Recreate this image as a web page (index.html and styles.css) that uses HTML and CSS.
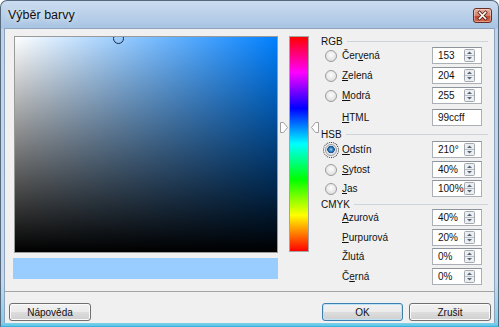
FILE: index.html
```html
<!DOCTYPE html>
<html lang="cs">
<head>
    <meta charset="UTF-8">
    <title>Výběr barvy</title>
    <link rel="stylesheet" href="styles.css">
</head>
<body>
    <div class="window">
        <div class="titlebar">
            <span class="title">Výběr barvy</span>
            <span class="close">
                <svg width="17" height="13" viewBox="0 0 17 13">
                    <path d="M5.5 3.5l6 6M11.5 3.5l-6 6" stroke="#5a2418" stroke-width="3.2" stroke-linecap="square"/>
                    <path d="M5.5 3.5l6 6M11.5 3.5l-6 6" stroke="#fff" stroke-width="1.6" stroke-linecap="square"/>
                </svg>
            </span>
        </div>
        <div class="client">
            <div class="main">
                <div class="picker">
                    <div class="field"><span class="marker"></span></div>
                    <div class="swatch"></div>
                </div>
                <div class="hue">
                    <div class="hue-bar"></div>
                    <svg class="arrow arrow-left" width="8" height="11" viewBox="0 0 8 11">
                        <path d="M0.5 0.5H3.5L7.5 5.5L3.5 10.5H0.5Z" fill="#fff" stroke="#a0a0a0"/>
                    </svg>
                    <svg class="arrow arrow-right" width="8" height="11" viewBox="0 0 8 11">
                        <path d="M7.5 0.5H4.5L0.5 5.5L4.5 10.5H7.5Z" fill="#fff" stroke="#a0a0a0"/>
                    </svg>
                </div>
                <div class="panel">
                    <div class="group group-rgb">RGB</div>
                    <div class="row">
                        <span class="radio"></span>
                        <span class="label">Čer<u>v</u>ená</span>
                        <div class="num"><span>153</span><svg class="spin" width="11" height="13" viewBox="0 0 11 13"><rect x="0.5" y="0.5" width="10" height="12" rx="1" fill="#eceef0" stroke="#a3a9b0"/><path d="M1 6.5H10" stroke="#b9bec4"/><path d="M3 5H8L5.5 2.5Z" fill="#56657a"/><path d="M3 8H8L5.5 10.5Z" fill="#56657a"/></svg></div>
                    </div>
                    <div class="row">
                        <span class="radio"></span>
                        <span class="label"><u>Z</u>elená</span>
                        <div class="num"><span>204</span><svg class="spin" width="11" height="13" viewBox="0 0 11 13"><rect x="0.5" y="0.5" width="10" height="12" rx="1" fill="#eceef0" stroke="#a3a9b0"/><path d="M1 6.5H10" stroke="#b9bec4"/><path d="M3 5H8L5.5 2.5Z" fill="#56657a"/><path d="M3 8H8L5.5 10.5Z" fill="#56657a"/></svg></div>
                    </div>
                    <div class="row">
                        <span class="radio"></span>
                        <span class="label"><u>M</u>odrá</span>
                        <div class="num"><span>255</span><svg class="spin" width="11" height="13" viewBox="0 0 11 13"><rect x="0.5" y="0.5" width="10" height="12" rx="1" fill="#eceef0" stroke="#a3a9b0"/><path d="M1 6.5H10" stroke="#b9bec4"/><path d="M3 5H8L5.5 2.5Z" fill="#56657a"/><path d="M3 8H8L5.5 10.5Z" fill="#56657a"/></svg></div>
                    </div>
                    <div class="row row-html">
                        <span class="no-radio"></span>
                        <span class="label"><u>H</u>TML</span>
                        <div class="num"><span>99ccff</span></div>
                    </div>

                    <div class="group group-hsb">HSB</div>
                    <div class="row row-tight">
                        <span class="radio checked"></span>
                        <span class="label"><u>O</u>dstín</span>
                        <div class="num"><span>210°</span><svg class="spin" width="11" height="13" viewBox="0 0 11 13"><rect x="0.5" y="0.5" width="10" height="12" rx="1" fill="#eceef0" stroke="#a3a9b0"/><path d="M1 6.5H10" stroke="#b9bec4"/><path d="M3 5H8L5.5 2.5Z" fill="#56657a"/><path d="M3 8H8L5.5 10.5Z" fill="#56657a"/></svg></div>
                    </div>
                    <div class="row row-tight">
                        <span class="radio"></span>
                        <span class="label"><u>S</u>ytost</span>
                        <div class="num"><span>40%</span><svg class="spin" width="11" height="13" viewBox="0 0 11 13"><rect x="0.5" y="0.5" width="10" height="12" rx="1" fill="#eceef0" stroke="#a3a9b0"/><path d="M1 6.5H10" stroke="#b9bec4"/><path d="M3 5H8L5.5 2.5Z" fill="#56657a"/><path d="M3 8H8L5.5 10.5Z" fill="#56657a"/></svg></div>
                    </div>
                    <div class="row row-tight">
                        <span class="radio"></span>
                        <span class="label"><u>J</u>as</span>
                        <div class="num"><span>100%</span><svg class="spin" width="11" height="13" viewBox="0 0 11 13"><rect x="0.5" y="0.5" width="10" height="12" rx="1" fill="#eceef0" stroke="#a3a9b0"/><path d="M1 6.5H10" stroke="#b9bec4"/><path d="M3 5H8L5.5 2.5Z" fill="#56657a"/><path d="M3 8H8L5.5 10.5Z" fill="#56657a"/></svg></div>
                    </div>

                    <div class="group group-cmyk">CMYK</div>
                    <div class="row row-tight">
                        <span class="no-radio"></span>
                        <span class="label"><u>A</u>zurová</span>
                        <div class="num"><span>40%</span><svg class="spin" width="11" height="13" viewBox="0 0 11 13"><rect x="0.5" y="0.5" width="10" height="12" rx="1" fill="#eceef0" stroke="#a3a9b0"/><path d="M1 6.5H10" stroke="#b9bec4"/><path d="M3 5H8L5.5 2.5Z" fill="#56657a"/><path d="M3 8H8L5.5 10.5Z" fill="#56657a"/></svg></div>
                    </div>
                    <div class="row row-tight">
                        <span class="no-radio"></span>
                        <span class="label"><u>P</u>urpurová</span>
                        <div class="num"><span>20%</span><svg class="spin" width="11" height="13" viewBox="0 0 11 13"><rect x="0.5" y="0.5" width="10" height="12" rx="1" fill="#eceef0" stroke="#a3a9b0"/><path d="M1 6.5H10" stroke="#b9bec4"/><path d="M3 5H8L5.5 2.5Z" fill="#56657a"/><path d="M3 8H8L5.5 10.5Z" fill="#56657a"/></svg></div>
                    </div>
                    <div class="row row-tight">
                        <span class="no-radio"></span>
                        <span class="label">Žlutá</span>
                        <div class="num"><span>0%</span><svg class="spin" width="11" height="13" viewBox="0 0 11 13"><rect x="0.5" y="0.5" width="10" height="12" rx="1" fill="#eceef0" stroke="#a3a9b0"/><path d="M1 6.5H10" stroke="#b9bec4"/><path d="M3 5H8L5.5 2.5Z" fill="#56657a"/><path d="M3 8H8L5.5 10.5Z" fill="#56657a"/></svg></div>
                    </div>
                    <div class="row row-tight">
                        <span class="no-radio"></span>
                        <span class="label">Č<u>e</u>rná</span>
                        <div class="num"><span>0%</span><svg class="spin" width="11" height="13" viewBox="0 0 11 13"><rect x="0.5" y="0.5" width="10" height="12" rx="1" fill="#eceef0" stroke="#a3a9b0"/><path d="M1 6.5H10" stroke="#b9bec4"/><path d="M3 5H8L5.5 2.5Z" fill="#56657a"/><path d="M3 8H8L5.5 10.5Z" fill="#56657a"/></svg></div>
                    </div>
                </div>
            </div>
            <div class="footer">
                <button class="btn btn-help">Nápověda</button>
                <span class="spacer"></span>
                <button class="btn btn-ok">OK</button>
                <button class="btn btn-cancel">Zrušit</button>
            </div>
        </div>
    </div>
</body>
</html>
```

FILE: styles.css
```css
html, body {
    margin: 0;
    padding: 0;
}

body {
    font-family: "Liberation Sans", Arial, sans-serif;
    font-size: 10px;
    color: #111;
    background: #fff;
}

.window {
    width: 499px;
    height: 327px;
    box-sizing: border-box;
    border: 1px solid #56697f;
    border-bottom-color: #3ab4dc;
    border-radius: 7px 7px 0 0;
    padding: 0 3px 3px;
    display: flex;
    flex-direction: column;
    background: linear-gradient(to bottom, #cbdcef 0, #a8c4e3 27px, #bed3ea 28px, #c6d9ec 280px, #7fd1ea 322px, #4fc2e6 326px);
}

.titlebar {
    height: 27px;
    display: flex;
    align-items: center;
    justify-content: space-between;
    padding: 0 3px 0 4px;
}

.title {
    font-size: 12.5px;
    color: #111;
    text-shadow: 0 0 6px rgba(255, 255, 255, 0.9);
    margin-top: 1px;
}

.close {
    width: 19px;
    height: 15px;
    box-sizing: border-box;
    border: 1px solid #6b2c22;
    border-radius: 3px;
    background: linear-gradient(to bottom, #e9b1a2 0, #d58069 50%, #c2452d 51%, #cf6a4e 100%);
    box-shadow: inset 0 0 0 1px rgba(255, 255, 255, 0.35);
    display: flex;
    align-items: center;
    justify-content: center;
    margin-top: 1px;
}

.client {
    flex: 1;
    background: #f0f0f0;
    border: 1px solid #8ea3bd;
    border-bottom: none;
    display: flex;
    flex-direction: column;
}

.main {
    height: 262px;
    box-sizing: border-box;
    padding: 7px 0 0 8px;
    display: flex;
}

.picker {
    width: 265px;
    display: flex;
    flex-direction: column;
}

.field {
    position: relative;
    overflow: hidden;
    width: 264px;
    height: 217px;
    box-sizing: border-box;
    margin-left: 1px;
    border: 1px solid #9a9a9a;
    background:
        linear-gradient(to bottom, rgba(0, 0, 0, 0), #000),
        linear-gradient(to right, #fff, #0080ff);
}

.marker {
    position: absolute;
    left: 98px;
    top: -4px;
    width: 11px;
    height: 11px;
    box-sizing: border-box;
    border: 1px solid #1a2840;
    border-radius: 50%;
}

.swatch {
    height: 21px;
    margin-top: 5px;
    background: #99ccff;
}

.hue {
    position: relative;
    width: 39px;
    margin-left: 2px;
}

.hue-bar {
    width: 20px;
    height: 216px;
    box-sizing: border-box;
    margin-left: 9px;
    border: 1px solid #a4a4a4;
    background: linear-gradient(to bottom, #ff0000, #ff00ff 16.6%, #0000ff 33.3%, #00ffff 50%, #00ff00 66.6%, #ffff00 83.3%, #ff0000);
}

.arrow {
    position: absolute;
    top: 86px;
}

.arrow-left {
    left: 0;
}

.arrow-right {
    left: 31px;
}

.panel {
    width: 170px;
    display: flex;
    flex-direction: column;
}

.group {
    display: flex;
    align-items: center;
    gap: 4px;
    padding-left: 2px;
    margin-right: 1px;
}

.group::after {
    content: "";
    flex: 1;
    border-top: 1px solid #cdd4da;
}

.group-rgb {
    height: 11px;
}

.group-hsb {
    height: 14px;
}

.group-cmyk {
    height: 9.5px;
}

.row {
    height: 20px;
    display: flex;
    align-items: flex-start;
}

.row-html {
    height: 18px;
    margin-top: 2px;
}

.row-tight {
    height: 19.5px;
}

.radio,
.no-radio {
    width: 12px;
    height: 12px;
    flex: none;
    margin: 3px 5px 0 6px;
    box-sizing: border-box;
    border-radius: 50%;
}

.radio {
    border: 1px solid #9a9c9e;
    background: radial-gradient(circle at 50% 40%, #fdfdfd 0, #e6e6e6 60%, #cfd0d1 100%);
}

.radio.checked {
    background: radial-gradient(circle at 50% 45%, #9fd3f3 0, #2f7fc0 2px, #1b4f8a 3.5px, #dde2e6 4px, #f4f4f4 100%);
    outline: 1px dotted #222;
    outline-offset: 1px;
}

.label {
    width: 90px;
    height: 17px;
    line-height: 17px;
    white-space: nowrap;
}

.num {
    width: 50px;
    height: 17px;
    box-sizing: border-box;
    border: 1px solid #abb0b6;
    border-top-color: #8e949b;
    background: #fff;
    display: flex;
    align-items: center;
    justify-content: space-between;
    padding: 0 6px 0 5px;
}

.spin {
    display: block;
}

.footer {
    flex: 1;
    border-top: 1px solid #a3a3a3;
    display: flex;
    align-items: flex-start;
    padding: 11px 3px 0 4px;
}

.spacer {
    flex: 1;
}

.btn {
    height: 18px;
    padding: 0;
    font-family: inherit;
    font-size: 10px;
    color: #111;
    border: 1px solid #707070;
    border-radius: 3px;
    background: linear-gradient(to bottom, #f2f2f2 0, #ebebeb 50%, #dddddd 51%, #cfcfcf 100%);
    box-shadow: inset 0 0 0 1px #fafafa;
}

.btn-help {
    width: 82px;
}

.btn-ok {
    width: 81px;
    border-color: #3c7fb1;
    box-shadow: inset 0 0 0 1px #bfe3f6;
}

.btn-cancel {
    width: 82px;
    margin-left: 6px;
}
```
